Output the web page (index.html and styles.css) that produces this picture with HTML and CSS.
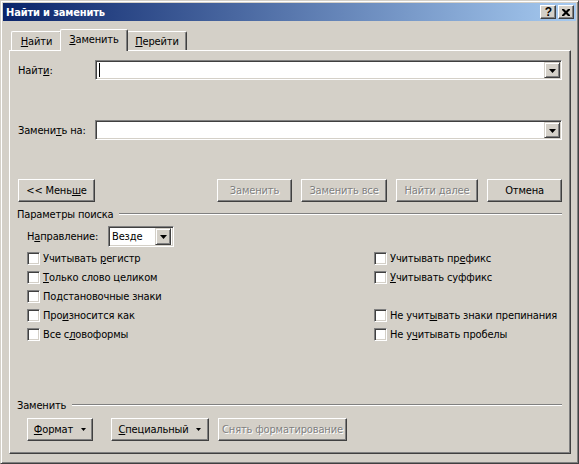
FILE: index.html
```html
<!DOCTYPE html>
<html lang="ru">
<head>
<meta charset="utf-8">
<title>Найти и заменить</title>
<link rel="stylesheet" href="styles.css">
</head>
<body>
<div class="window">
  <div class="titlebar">
    <span class="title">Найти и заменить</span>
    <div class="tbtns">
      <span class="tbtn help">?</span>
      <span class="tbtn close"><svg width="8" height="7" viewBox="0 0 8 7"><path d="M0 0h2l2 2 2-2h2v1l-2.5 2.5 2.5 2.5v1h-2l-2-2-2 2h-2v-1l2.5-2.5-2.5-2.5z" fill="#000"/></svg></span>
    </div>
  </div>
  <div class="client">
    <div class="tabs">
      <div class="tab tab-find"><span><u>Н</u>айти</span></div>
      <div class="tab active"><span><u>З</u>аменить</span></div>
      <div class="tab tab-go"><span><u>П</u>ерейти</span></div>
    </div>
    <div class="panel">
      <div class="field find-row">
        <span class="flabel">Найт<u>и</u>:</span>
        <div class="combo"><span class="caret"></span><span class="dd"><svg width="7" height="4" viewBox="0 0 7 4"><polygon points="0,0 7,0 3.5,4" fill="#000"/></svg></span></div>
      </div>
      <div class="field repl-row">
        <span class="flabel">Замени<u>т</u>ь на:</span>
        <div class="combo"><span class="dd"><svg width="7" height="4" viewBox="0 0 7 4"><polygon points="0,0 7,0 3.5,4" fill="#000"/></svg></span></div>
      </div>
      <div class="btnrow">
        <div class="btn w77"><span>&lt;&lt; Мень<u>ш</u>е</span></div>
        <div class="spacer"></div>
        <div class="btn w75 disabled"><span>Заменить</span></div>
        <div class="btn w86 disabled"><span>Заменить все</span></div>
        <div class="btn w82 disabled"><span>Найти далее</span></div>
        <div class="btn w75"><span>Отмена</span></div>
      </div>
      <div class="group">
        <span class="glabel">Параметры поиска</span><span class="etch"></span>
      </div>
      <div class="dir-row">
        <span class="dlabel">Н<u>а</u>правление:</span>
        <div class="select"><span class="sval">Везде</span><span class="dd"><svg width="7" height="4" viewBox="0 0 7 4"><polygon points="0,0 7,0 3.5,4" fill="#000"/></svg></span></div>
      </div>
      <div class="checks">
        <div class="chk"><span class="box"></span><span>Учитывать <u>р</u>егистр</span></div>
        <div class="chk"><span class="box"></span><span>Учитывать пр<u>е</u>фикс</span></div>
        <div class="chk"><span class="box"></span><span><u>Т</u>олько слово целиком</span></div>
        <div class="chk"><span class="box"></span><span><u>У</u>читывать суффикс</span></div>
        <div class="chk"><span class="box"></span><span>Подстановочные знаки</span></div>
        <div class="chk empty"></div>
        <div class="chk"><span class="box"></span><span>Про<u>и</u>зносится как</span></div>
        <div class="chk"><span class="box"></span><span>Не учит<u>ы</u>вать знаки препинания</span></div>
        <div class="chk"><span class="box"></span><span>Все с<u>л</u>овоформы</span></div>
        <div class="chk"><span class="box"></span><span>Не у<u>ч</u>итывать пробелы</span></div>
      </div>
      <div class="group bottom-group">
        <span class="glabel">Заменить</span><span class="etch"></span>
      </div>
      <div class="btnrow2">
        <div class="btn w66"><span><u>Ф</u>ормат</span><svg class="arr" width="5" height="3" viewBox="0 0 5 3"><polygon points="0,0 5,0 2.5,3" fill="#000"/></svg></div>
        <div class="btn w98"><span><u>С</u>пециальный</span><svg class="arr" width="5" height="3" viewBox="0 0 5 3"><polygon points="0,0 5,0 2.5,3" fill="#000"/></svg></div>
        <div class="btn w129 disabled"><span>Снять форматирование</span></div>
      </div>
    </div>
  </div>
</div>
</body>
</html>
```
FILE: styles.css
```css
* { box-sizing: border-box; }
html, body { margin: 0; padding: 0; background: #D4D0C8; }
body {
  font-family: "DejaVu Sans Condensed", "Liberation Sans", Arial, sans-serif;
  font-size: 11px;
  letter-spacing: -0.15px;
  color: #000;
}
u { text-decoration: underline; text-underline-offset: 1px; }

.window {
  width: 579px;
  height: 464px;
  background: #D4D0C8;
  border: 1px solid;
  border-color: #D4D0C8 #404040 #404040 #D4D0C8;
  box-shadow: inset 1px 1px #FFFFFF, inset -1px -1px #808080;
  padding: 2px;
  display: flex;
  flex-direction: column;
}

.titlebar {
  height: 18px;
  background: linear-gradient(to right, #0A246A, #A6CAF0);
  display: flex;
  align-items: center;
  padding: 0 2px 0 2px;
}
.title {
  color: #fff;
  font-weight: bold;
  font-size: 11px;
  flex: 1;
  padding-left: 1px;
}
.tbtns { display: flex; gap: 2px; }
.tbtn {
  width: 16px;
  height: 14px;
  background: #D4D0C8;
  border: 1px solid;
  border-color: #fff #404040 #404040 #fff;
  box-shadow: inset -1px -1px #808080;
  display: flex;
  align-items: center;
  justify-content: center;
  font-family: "Liberation Sans", Arial, sans-serif;
  font-weight: bold;
  font-size: 12px;
  line-height: 1;
  letter-spacing: 0;
}
.tbtn.help { padding-left: 1px; }

.client {
  flex: 1;
  display: flex;
  flex-direction: column;
  padding: 8px 5px 7px 6px;
}

.tabs {
  display: flex;
  align-items: flex-end;
  padding-left: 2px;
  height: 21px;
  position: relative;
  z-index: 2;
}
.tab {
  height: 19px;
  background: #D4D0C8;
  border-top: 1px solid #fff;
  border-left: 1px solid #fff;
  border-right: 1px solid #404040;
  box-shadow: inset -1px 0 #808080;
  border-radius: 2px 2px 0 0;
  padding: 3px 0 0 0;
  text-align: center;
}
.tab-find { width: 51px; }
.tab-go { width: 60px; }
.tab.active {
  height: 22px;
  width: 68px;
  margin: 0 -1px -1px -2px;
  padding-top: 3px;
  position: relative;
  z-index: 3;
}

.panel {
  flex: 1;
  background: #D4D0C8;
  border: 1px solid;
  border-color: #fff #404040 #404040 #fff;
  box-shadow: inset -1px -1px #808080;
  padding: 9px 8px 12px 7px;
  display: flex;
  flex-direction: column;
}

.field {
  display: flex;
  align-items: center;
  height: 20px;
}
.repl-row { margin-top: 40px; }
.flabel { width: 78px; padding-left: 1px; }
.combo {
  flex: 1;
  height: 20px;
  background: #fff;
  border: 1px solid;
  border-color: #808080 #fff #fff #808080;
  box-shadow: inset 1px 1px #404040, inset -1px -1px #D4D0C8;
  display: flex;
  align-items: center;
  justify-content: space-between;
  padding: 1px;
}
.caret {
  width: 1px;
  height: 14px;
  background: #000;
  margin-left: 2px;
}
.dd {
  margin-left: auto;
  width: 16px;
  height: 16px;
  background: #D4D0C8;
  border: 1px solid;
  border-color: #D4D0C8 #404040 #404040 #D4D0C8;
  box-shadow: inset 1px 1px #fff, inset -1px -1px #808080;
  display: flex;
  align-items: center;
  justify-content: center;
}
.dd svg { margin-top: 1px; }

.btnrow {
  display: flex;
  margin-top: 39px;
  gap: 9px;
  padding-left: 1px;
}
.spacer { flex: 1; }
.btn {
  height: 23px;
  background: #D4D0C8;
  border: 1px solid;
  border-color: #fff #404040 #404040 #fff;
  box-shadow: inset -1px -1px #808080;
  display: flex;
  align-items: center;
  justify-content: center;
  white-space: nowrap;
}
.btn.disabled {
  color: #808080;
  text-shadow: 1px 1px #fff;
}
.w66 { width: 66px; }
.w75 { width: 75px; }
.w77 { width: 77px; }
.w82 { width: 82px; }
.w86 { width: 86px; }
.w98 { width: 98px; }
.w129 { width: 129px; }
.btn .arr { margin-left: 8px; }

.group {
  display: flex;
  align-items: center;
  height: 14px;
  margin-top: 5px;
}
.glabel { padding-right: 6px; }
.etch {
  flex: 1;
  height: 2px;
  border-top: 1px solid #808080;
  border-bottom: 1px solid #fff;
}

.dir-row {
  display: flex;
  align-items: center;
  margin-top: 5px;
  padding-left: 10px;
  height: 21px;
}
.dlabel { width: 81px; }
.select {
  width: 66px;
  height: 21px;
  background: #fff;
  border: 1px solid;
  border-color: #808080 #fff #fff #808080;
  box-shadow: inset 1px 1px #404040, inset -1px -1px #D4D0C8;
  display: flex;
  align-items: center;
  padding: 2px;
}
.sval { padding-left: 1px; }
.select .dd { height: 17px; }

.checks {
  display: grid;
  grid-template-columns: 347px 1fr;
  grid-auto-rows: 19px;
  margin-top: 2px;
  padding-left: 10px;
}
.chk {
  display: flex;
  align-items: center;
}
.box {
  width: 13px;
  height: 13px;
  background: #fff;
  border: 1px solid;
  border-color: #808080 #fff #fff #808080;
  box-shadow: inset 1px 1px #404040, inset -1px -1px #D4D0C8;
  margin-right: 3px;
}

.bottom-group { margin-top: auto; }
.btnrow2 {
  display: flex;
  gap: 18px;
  margin-top: 6px;
  padding-left: 10px;
}
.btnrow2 .btn + .btn.disabled { margin-left: -9px; }
```
